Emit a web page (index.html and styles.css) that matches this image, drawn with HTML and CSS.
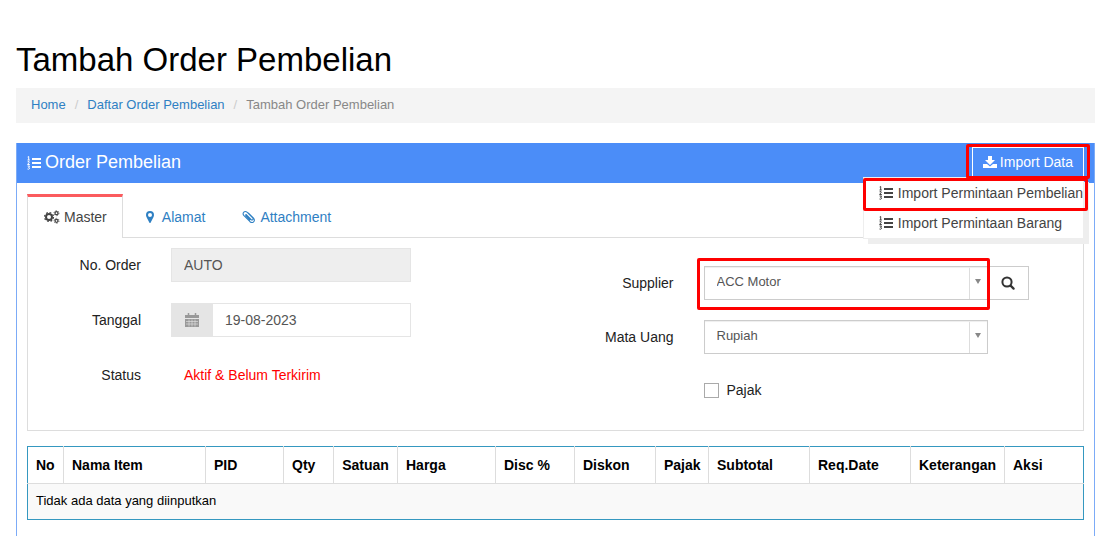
FILE: index.html
```html
<!DOCTYPE html>
<html lang="id">
<head>
    <meta charset="UTF-8">
    <meta name="viewport" content="width=device-width, initial-scale=1.0">
    <title>Tambah Order Pembelian</title>
    <link rel="stylesheet" href="styles.css">
</head>
<body>
    <!-- shared icons -->
    <svg class="sprite" aria-hidden="true">
        <symbol id="icon-list" viewBox="0 0 14 14">
            <path d="M5 3h9M5 7h9M5 11h9" fill="none" stroke="currentColor" stroke-width="2"/>
            <path d="M.7 1l1-.5V4M.5 4h2.300M.6 5.800q1.800-.8 1.800.3L.6 8.500h2.200M.6 10h2L1.500 11.400q1.400.1 1 1.200-.6 1-2 .4" fill="none" stroke="currentColor" stroke-width="1"/>
        </symbol>
        <symbol id="icon-download" viewBox="0 0 14 14">
            <path d="M5 1h4v4h3L7 10 2 5h3z" fill="currentColor"/>
            <path d="M0 9h4l3 2.500L10 9h4v4H0z" fill="currentColor"/>
        </symbol>
        <symbol id="icon-cogs" viewBox="0 0 16 14">
            <circle cx="5" cy="7" r="3" fill="none" stroke="currentColor" stroke-width="2"/>
            <circle cx="5" cy="7" r="4.500" fill="none" stroke="currentColor" stroke-width="1.200" stroke-dasharray="1.800 1.734"/>
            <circle cx="12.500" cy="3.200" r="1.500" fill="none" stroke="currentColor" stroke-width="1.300"/>
            <circle cx="12.500" cy="3.200" r="2.500" fill="none" stroke="currentColor" stroke-width=".8" stroke-dasharray="1.300 1.318"/>
            <circle cx="12.500" cy="10.800" r="1.500" fill="none" stroke="currentColor" stroke-width="1.300"/>
            <circle cx="12.500" cy="10.800" r="2.500" fill="none" stroke="currentColor" stroke-width=".8" stroke-dasharray="1.300 1.318"/>
        </symbol>
        <symbol id="icon-marker" viewBox="0 0 8 14">
            <path fill-rule="evenodd" d="M4 1a4 4 0 0 1 4 4c0 1-.3 1.600-.6 2.200L4.700 12.500q-.7 1-1.400 0L.6 7.200C.3 6.600 0 6 0 5a4 4 0 0 1 4-4zm0 2a2 2 0 1 0 0 4 2 2 0 0 0 0-4z" fill="currentColor"/>
        </symbol>
        <symbol id="icon-clip" viewBox="0 0 14 14">
            <path d="M4 4.500l5 5q1 .9 1.800.1t-.1-1.800L5.300 2.400Q3.300.7 1.800 2.200t.2 3.500l6 6q2 1.600 3.600.1t-.1-3.600L6.500 3.200M4 4.500q-.6.900.2 1.700l3.600 3.600" fill="none" stroke="currentColor" stroke-width="1.100" stroke-linecap="round"/>
        </symbol>
        <symbol id="icon-calendar" viewBox="0 0 14 14">
            <path d="M0 2h14v3H0zM0 6h14v8H0z" fill="currentColor"/>
            <path d="M3.500 0v3M10.500 0v3" stroke="currentColor" stroke-width="1.500"/>
            <path d="M1 8.500h12M1 11h12M4 6.500v7M7 6.500v7M10 6.500v7" stroke="#e5e5e5" stroke-width=".6"/>
        </symbol>
        <symbol id="icon-search" viewBox="0 0 14 14">
            <circle cx="6" cy="6" r="4.600" fill="none" stroke="currentColor" stroke-width="2"/>
            <path d="M9.600 9.600l3 3" stroke="currentColor" stroke-width="2.200" stroke-linecap="round"/>
        </symbol>
    </svg>

    <h1 class="page-title">Tambah Order Pembelian</h1>
    <nav class="breadcrumb">
        <a href="#">Home</a>
        <span class="sep">/</span>
        <a href="#">Daftar Order Pembelian</a>
        <span class="sep">/</span>
        <span class="current">Tambah Order Pembelian</span>
    </nav>

    <main class="portlet">
        <header class="portlet-header">
            <h2 class="portlet-title"><svg class="icon"><use href="#icon-list"/></svg>Order Pembelian</h2>
            <div class="actions">
                <button type="button" class="btn-import"><svg class="icon"><use href="#icon-download"/></svg>Import Data</button>
                <div class="dropdown">
                    <a href="#" class="highlighted"><svg class="icon"><use href="#icon-list"/></svg>Import Permintaan Pembelian</a>
                    <a href="#"><svg class="icon"><use href="#icon-list"/></svg>Import Permintaan Barang</a>
                </div>
            </div>
        </header>

        <div class="portlet-body">
            <nav class="tabs">
                <a href="#" class="tab active"><svg class="icon icon-wide"><use href="#icon-cogs"/></svg>Master</a>
                <a href="#" class="tab"><svg class="icon icon-narrow"><use href="#icon-marker"/></svg>Alamat</a>
                <a href="#" class="tab"><svg class="icon"><use href="#icon-clip"/></svg>Attachment</a>
            </nav>

            <form class="tab-content">
                <div class="form-left">
                    <div class="form-row">
                        <label for="no-order">No. Order</label>
                        <input class="control" type="text" id="no-order" value="AUTO" readonly>
                    </div>
                    <div class="form-row">
                        <label for="tanggal">Tanggal</label>
                        <div class="date-group">
                            <span class="addon"><svg class="icon"><use href="#icon-calendar"/></svg></span>
                            <input class="control" type="text" id="tanggal" value="19-08-2023">
                        </div>
                    </div>
                    <div class="form-row">
                        <span class="label">Status</span>
                        <span class="status">Aktif &amp; Belum Terkirim</span>
                    </div>
                </div>

                <div class="form-right">
                    <div class="form-row">
                        <label for="supplier">Supplier</label>
                        <div class="select supplier">
                            <select id="supplier"><option>ACC Motor</option></select>
                        </div>
                        <button type="button" class="btn-search" aria-label="Cari"><svg class="icon"><use href="#icon-search"/></svg></button>
                    </div>
                    <div class="form-row">
                        <label for="mata-uang">Mata Uang</label>
                        <div class="select">
                            <select id="mata-uang"><option>Rupiah</option></select>
                        </div>
                    </div>
                    <div class="form-row check-row">
                        <span class="label"></span>
                        <input type="checkbox" id="pajak">
                        <label for="pajak" class="check-label">Pajak</label>
                    </div>
                </div>
            </form>

            <table class="items">
                <thead>
                    <tr>
                        <th class="col-no">No</th>
                        <th class="col-nama">Nama Item</th>
                        <th class="col-pid">PID</th>
                        <th class="col-qty">Qty</th>
                        <th class="col-satuan">Satuan</th>
                        <th class="col-harga">Harga</th>
                        <th class="col-disc">Disc %</th>
                        <th class="col-diskon">Diskon</th>
                        <th class="col-pajak">Pajak</th>
                        <th class="col-subtotal">Subtotal</th>
                        <th class="col-date">Req.Date</th>
                        <th class="col-ket">Keterangan</th>
                        <th>Aksi</th>
                    </tr>
                </thead>
                <tbody>
                    <tr>
                        <td colspan="13">Tidak ada data yang diinputkan</td>
                    </tr>
                </tbody>
            </table>
        </div>
    </main>
</body>
</html>
```

FILE: styles.css
```css
* {
    box-sizing: border-box;
}
body {
    display: flex;
    flex-direction: column;
    min-height: 100vh;
    margin: 0;
    padding: 40px 15px 0 16px;
    font-family: "Liberation Sans", Arial, sans-serif;
    font-size: 14px;
    line-height: 20px;
    color: #222;
    background: #fff;
}
a {
    color: #2f80c3;
    text-decoration: none;
}
input, select, button {
    font-family: inherit;
    font-size: 14px;
    border-radius: 0;
}
.sprite {
    position: absolute;
    width: 0;
    height: 0;
}
.icon {
    flex: none;
    width: 14px;
    height: 14px;
}
.icon-wide {
    width: 16px;
}
.icon-narrow {
    width: 8px;
}
.page-title {
    margin: 0 0 8px;
    font-size: 33px;
    font-weight: normal;
    line-height: 40px;
    color: #000;
}
.breadcrumb {
    display: flex;
    gap: 9px;
    margin-bottom: 20px;
    padding: 7px 15px 8px;
    font-size: 13px;
    background: #f4f4f4;
}
.sep {
    color: #ccc;
}
.current {
    color: #888;
}

/* portlet */
.portlet {
    flex: 1;
    border: 1px solid #7cabf7;
    border-top: 0;
    border-bottom: 0;
}
.portlet-header {
    display: flex;
    justify-content: space-between;
    height: 40px;
    padding: 4px 10px 0;
    color: #fff;
    background: #4b8df8;
}
.portlet-title {
    display: flex;
    align-items: center;
    gap: 4px;
    margin: 0;
    height: 30px;
    font-size: 18px;
    font-weight: normal;
}
.portlet-title .icon {
    margin-top: 2px;
}
.actions {
    position: relative;
}
.btn-import {
    position: relative;
    display: flex;
    align-items: center;
    gap: 3px;
    height: 30px;
    padding: 0 10px;
    color: #fff;
    background: #4b8df8;
    border: 1px solid #fff;
    cursor: pointer;
}
.dropdown {
    position: absolute;
    top: 30px;
    right: 0;
    background: #fff;
    border: 1px solid #eee;
    box-shadow: 5px 5px #eee;
}
.dropdown a {
    position: relative;
    display: flex;
    align-items: center;
    gap: 5px;
    height: 30px;
    padding: 0 0 0 15px;
    color: #444;
    white-space: nowrap;
}

/* red marker frames */
.btn-import::after,
.dropdown .highlighted::after,
.supplier::before {
    content: "";
    position: absolute;
    z-index: 2;
    border: 3px solid #fe0000;
    border-radius: 2px;
    pointer-events: none;
}
.btn-import::after {
    inset: -4px -7px -3px -7px;
}
.dropdown .highlighted::after {
    inset: 0 -5px -3px -1px;
}
.supplier::before {
    inset: -8px -2px -10px -7px;
}

/* tabs */
.portlet-body {
    padding: 11px 10px 0;
}
.tabs {
    display: flex;
    gap: 3px;
}
.tab {
    display: flex;
    align-items: center;
    gap: 4px;
    height: 43px;
    padding: 3px 17px 0;
}
.tab .icon-narrow {
    margin-right: 4px;
}
.tab.active {
    z-index: 1;
    height: 44px;
    margin: 0 3px -1px 0;
    padding: 0 15px 2px 16px;
    color: #444;
    background: #fff;
    border: 1px solid #ddd;
    border-top: 3px solid #fb5b5e;
    border-bottom: 0;
}
.tab-content {
    display: grid;
    grid-template-columns: 1fr 1fr;
    margin-bottom: 15px;
    padding: 10px 15px 24px;
    border: 1px solid #ddd;
}

/* form */
.form-left, .form-right {
    display: flex;
    flex-direction: column;
    gap: 21px;
}
.form-right {
    gap: 20px;
    padding-top: 18px;
}
.form-row {
    display: flex;
    align-items: center;
    height: 34px;
}
.form-row.check-row {
    height: 32px;
}
.form-row label, .label {
    width: 98px;
    margin-right: 30px;
    text-align: right;
}
.form-right label, .form-right .label {
    width: 118px;
}
.control {
    width: 240px;
    height: 34px;
    padding: 0 12px;
    color: #555;
    background: #fff;
    border: 1px solid #e5e5e5;
}
.control[readonly] {
    background: #eee;
}
.date-group {
    display: flex;
    width: 240px;
}
.date-group .control {
    flex: 1;
    min-width: 0;
}
.addon {
    display: flex;
    align-items: center;
    justify-content: center;
    width: 41px;
    color: #999;
    background: #e5e5e5;
}
.status {
    padding-left: 13px;
    color: #f00;
}
.select {
    position: relative;
    width: 284px;
}
.select select {
    display: block;
    width: 100%;
    height: 34px;
    padding: 0 30px 4px 12px;
    font-size: 13px;
    color: #555;
    background: linear-gradient(#ddd, #ddd) right 17px top / 1px 100% no-repeat #fff;
    border: 1px solid #ccc;
    box-shadow: inset 0 1px 1px #eee;
    appearance: none;
}
.select::after {
    content: "";
    position: absolute;
    top: 13px;
    right: 7px;
    border: 3px solid transparent;
    border-top: 5px solid #888;
    border-bottom: 0;
}
.btn-search {
    display: flex;
    align-items: center;
    justify-content: center;
    width: 41px;
    height: 34px;
    padding: 0;
    color: #333;
    background: #fff;
    border: 1px solid #ccc;
    border-left: 0;
}
#pajak {
    width: 15px;
    height: 15px;
    margin: 0;
    background: #fff;
    border: 1px solid #aaa;
    appearance: none;
}
#pajak:checked {
    background: #4b8df8;
}
.form-right .check-label {
    width: auto;
    margin: 0 0 0 8px;
}

/* table */
.items {
    width: 100%;
    table-layout: fixed;
    border-collapse: collapse;
    border: 1px solid #3598c0;
    color: #000;
}
.items th, .items td {
    padding: 8px;
    text-align: left;
    white-space: nowrap;
}
.items th {
    height: 37px;
    border: 1px solid #ddd;
    border-top-color: #3598c0;
}
.items th:first-child {
    border-left-color: #3598c0;
}
.items th:last-child {
    border-right-color: #3598c0;
}
.items td {
    padding: 6px 8px 8px;
    height: 36px;
    font-size: 13px;
    background: #f9f9f9;
    border: 1px solid #3598c0;
    border-top-color: #ddd;
}
.col-no { width: 36px; }
.col-nama { width: 142px; }
.col-pid { width: 78px; }
.col-qty { width: 50px; }
.items .col-satuan { width: 64px; text-align: center; }
.col-harga { width: 98px; }
.col-disc { width: 79px; }
.col-diskon { width: 81px; }
.col-pajak { width: 53px; }
.col-subtotal { width: 101px; }
.col-date { width: 101px; }
.col-ket { width: 94px; }
```
